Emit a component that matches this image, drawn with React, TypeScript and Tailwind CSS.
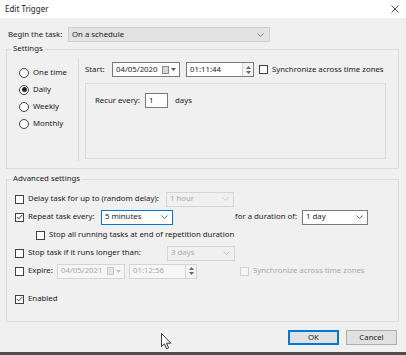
import React from 'react';

const font = "font-['Noto_Sans',sans-serif] text-[7.8px] leading-none text-[#1a1a1a]";

function Check({ checked = false, disabled = false }: { checked?: boolean; disabled?: boolean }) {
  return (
    <span
      className={`w-[9px] h-[9px] shrink-0 border flex items-center justify-center ${
        disabled ? 'border-[#cfcfcf] bg-[#f4f4f4]' : 'border-[#404040] bg-white'
      }`}
    >
      {checked && (
        <svg width="7" height="6" viewBox="0 0 7 6">
          <path d="M0.8 3 L2.7 4.9 L6.3 0.9" fill="none" stroke="#333" strokeWidth="1" />
        </svg>
      )}
    </span>
  );
}

function Radio({ checked = false, label }: { checked?: boolean; label: string }) {
  return (
    <div className="h-[17px] flex items-center gap-[4px] pl-[12px]">
      <span className="w-[10px] h-[10px] rounded-full border border-[#404040] bg-white flex items-center justify-center">
        {checked && <span className="w-[5px] h-[5px] rounded-full bg-[#222]" />}
      </span>
      <span>{label}</span>
    </div>
  );
}

function Chevron({ color = '#606060' }: { color?: string }) {
  return (
    <svg width="7" height="4" viewBox="0 0 7 4">
      <path d="M0.5 0.5 L3.5 3.5 L6.5 0.5" fill="none" stroke={color} strokeWidth="0.9" />
    </svg>
  );
}

function Combo({
  value,
  w,
  disabled = false,
  focused = false,
}: {
  value: string;
  w: string;
  disabled?: boolean;
  focused?: boolean;
}) {
  const tone = disabled
    ? 'border-[#d4d4d4] bg-[#f0f0f0] text-[#a8a8a8]'
    : focused
    ? 'border-[#0078d7] bg-white'
    : 'border-[#7a7a7a] bg-white';
  return (
    <div className={`${w} h-[15px] border ${tone} flex items-center justify-between pl-[3px] pr-[4px]`}>
      <span>{value}</span>
      <Chevron color={disabled ? '#c0c0c0' : '#555'} />
    </div>
  );
}

function DateBox({ value, disabled = false }: { value: string; disabled?: boolean }) {
  return (
    <div
      className={`w-[68px] h-[15px] border flex items-center justify-between pl-[3px] pr-[3px] ${
        disabled ? 'border-[#d4d4d4] bg-[#f6f6f6] text-[#a8a8a8]' : 'border-[#7a7a7a] bg-white'
      }`}
    >
      <span>{value}</span>
      <span className="flex items-center gap-[2px]">
        <svg width="7" height="8" viewBox="0 0 7 8">
          <rect x="0.5" y="0.5" width="6" height="7" fill={disabled ? '#e4e4e4' : '#d8d8d8'} stroke={disabled ? '#c8c8c8' : '#8a8a8a'} />
        </svg>
        <svg width="5" height="3" viewBox="0 0 5 3">
          <path d="M0 0 L5 0 L2.5 3 Z" fill={disabled ? '#c0c0c0' : '#555'} />
        </svg>
      </span>
    </div>
  );
}

function TimeBox({ value, disabled = false }: { value: string; disabled?: boolean }) {
  return (
    <div
      className={`w-[68px] h-[15px] border flex items-center justify-between pl-[3px] ${
        disabled ? 'border-[#d4d4d4] bg-[#f6f6f6] text-[#a8a8a8]' : 'border-[#7a7a7a] bg-white'
      }`}
    >
      <span>{value}</span>
      <span className="w-[11px] h-full border-l border-[#d0d0d0] bg-[#f4f4f4] flex flex-col items-center justify-center gap-[2px]">
        <svg width="5" height="3" viewBox="0 0 5 3">
          <path d="M0 3 L5 3 L2.5 0 Z" fill="#666" />
        </svg>
        <svg width="5" height="3" viewBox="0 0 5 3">
          <path d="M0 0 L5 0 L2.5 3 Z" fill="#666" />
        </svg>
      </span>
    </div>
  );
}

export default function App() {
  return (
    <div className={`w-[406px] h-[355px] bg-[#f0f0f0] flex flex-col relative overflow-hidden ${font}`}>
      {/* title bar */}
      <div className="h-[18px] bg-white flex items-center justify-between pl-[5px] pr-[7px] shrink-0">
        <span className="text-[8px]">Edit Trigger</span>
        <svg width="8" height="8" viewBox="0 0 8 8">
          <path d="M0.5 0.5 L7.5 7.5 M7.5 0.5 L0.5 7.5" stroke="#333" strokeWidth="0.9" />
        </svg>
      </div>

      <div className="flex-1 flex flex-col px-[6px]">
        {/* begin the task */}
        <div className="flex items-center mt-[9px] pl-[2px]">
          <span className="w-[60px]">Begin the task:</span>
          <div className="w-[202px] h-[15px] bg-[#e3e3e3] border border-[#cfcfcf] flex items-center justify-between pl-[3px] pr-[5px]">
            <span>On a schedule</span>
            <Chevron color="#777" />
          </div>
        </div>

        {/* settings */}
        <fieldset className="mt-[1px] border border-[#dadada] mr-[1px]">
          <legend className="ml-[4px] px-[2px] h-[12px] flex items-center">Settings</legend>
          <div className="flex">
            <div className="w-[71px] pt-[9px]">
              <Radio label="One time" />
              <Radio label="Daily" checked />
              <Radio label="Weekly" />
              <Radio label="Monthly" />
            </div>
            <div className="w-px mt-[3px] mb-[7px] bg-[#d8d8d8] h-[103px]" />
            <div className="flex-1 pl-[6px] pt-[7px] pr-[12px]">
              <div className="flex items-center">
                <span className="w-[27px]">Start:</span>
                <DateBox value="04/05/2020" />
                <div className="ml-[6px]">
                  <TimeBox value="01:11:44" />
                </div>
                <div className="ml-[5px] flex items-center gap-[4px]">
                  <Check />
                  <span>Synchronize across time zones</span>
                </div>
              </div>
              <div className="mt-[6px] h-[76px] border border-[#dadada] pl-[9px] pt-[9px]">
                <div className="flex items-center">
                  <span className="w-[50px]">Recur every:</span>
                  <div className="w-[23px] h-[15px] border border-[#7a7a7a] bg-white flex items-center pl-[3px]">1</div>
                  <span className="ml-[7px]">days</span>
                </div>
              </div>
            </div>
          </div>
        </fieldset>

        {/* advanced */}
        <fieldset className="mt-[4px] border border-[#dadada] mr-[1px]">
          <legend className="ml-[4px] px-[2px] h-[12px] flex items-center">Advanced settings</legend>
          <div className="pt-[5px] pb-[13px] pl-[8px]">
            <div className="h-[18px] flex items-center">
              <Check />
              <span className="ml-[4px] w-[138px]">Delay task for up to (random delay):</span>
              <Combo value="1 hour" w="w-[68px]" disabled />
            </div>
            <div className="h-[18px] flex items-center">
              <Check checked />
              <span className="ml-[4px] w-[73px]">Repeat task every:</span>
              <Combo value="5 minutes" w="w-[72px]" focused />
              <span className="ml-[62px] w-[67px]">for a duration of:</span>
              <Combo value="1 day" w="w-[66px]" />
            </div>
            <div className="h-[18px] flex items-center pl-[21px]">
              <Check />
              <span className="ml-[4px]">Stop all running tasks at end of repetition duration</span>
            </div>
            <div className="h-[18px] flex items-center">
              <Check />
              <span className="ml-[4px] w-[139px]">Stop task if it runs longer than:</span>
              <Combo value="3 days" w="w-[68px]" disabled />
            </div>
            <div className="h-[18px] flex items-center">
              <Check />
              <span className="ml-[4px] w-[29px]">Expire:</span>
              <DateBox value="04/05/2021" disabled />
              <div className="ml-[4px]">
                <TimeBox value="01:12:56" disabled />
              </div>
              <div className="ml-[43px] flex items-center gap-[4px] text-[#a8a8a8]">
                <Check disabled />
                <span>Synchronize across time zones</span>
              </div>
            </div>
            <div className="h-[18px] flex items-center mt-[10px]">
              <Check checked />
              <span className="ml-[4px]">Enabled</span>
            </div>
          </div>
        </fieldset>

        {/* buttons */}
        <div className="mt-[8px] flex justify-end gap-[7px] pr-[3px]">
          <button className="w-[51px] h-[15px] bg-[#e1e1e1] border-2 border-[#0078d7] flex items-center justify-center">OK</button>
          <button className="w-[51px] h-[15px] bg-[#e1e1e1] border border-[#adadad] flex items-center justify-center">Cancel</button>
        </div>
      </div>

      <div className="h-[3px] bg-[#4d4d4d] shrink-0" />

      {/* mouse pointer */}
      <svg className="absolute left-[161px] top-[333px]" width="11" height="17" viewBox="0 0 11 17">
        <path d="M0.5 0.5 L0.5 13.5 L3.5 10.8 L5.6 15.8 L7.6 14.9 L5.6 10.2 L9.8 10.2 Z" fill="white" stroke="#222" strokeWidth="0.9" strokeLinejoin="round" />
      </svg>
    </div>
  );
}
